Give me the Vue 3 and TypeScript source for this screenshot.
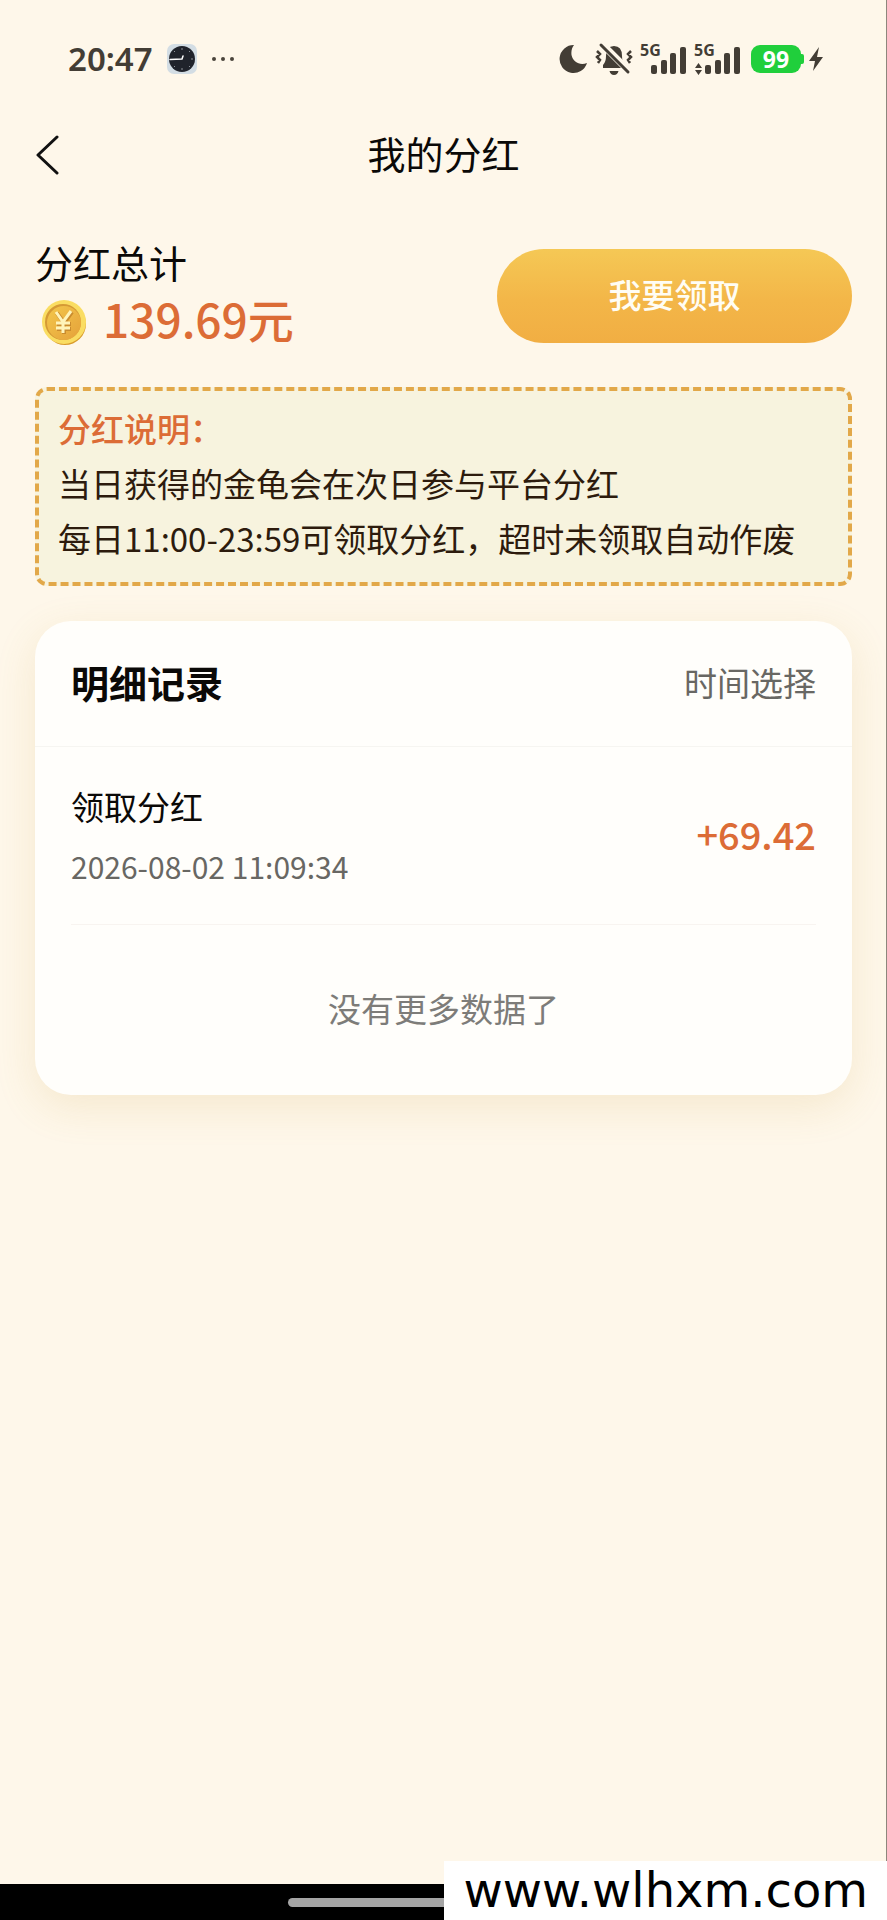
<script setup lang="ts">
interface DividendRecord {
  id: number
  title: string
  time: string
  amount: string
}

const total = '139.69'
const rules: string[] = [
  '当日获得的金龟会在次日参与平台分红',
  '每日11:00-23:59可领取分红，超时未领取自动作废',
]
const records: DividendRecord[] = [
  { id: 1, title: '领取分红', time: '2026-08-02 11:09:34', amount: '+69.42' },
]
</script>

<template>
  <div class="screen">
    <div class="status">
      <div class="status-group">
        <span class="clock-text">20:47</span>
        <svg width="30" height="30" viewBox="0 0 30 30" aria-hidden="true">
          <rect width="30" height="30" rx="7" fill="#d3dde4" />
          <circle cx="15" cy="15" r="13" fill="#20232b" />
          <path d="M15 4v2M15 24v2M26 15h-2M7 7l1 1M23 7l-1 1M7 23l1-1M23 23l-1-1" stroke="#8d9298" stroke-width="1" />
          <path d="M3 15.500L15 15M15 15l1-3" stroke="#fff" stroke-width="1.500" stroke-linecap="round" />
        </svg>
        <svg width="24" height="6" viewBox="0 0 24 6" fill="#4a443b" aria-hidden="true">
          <circle cx="3" cy="3" r="2" /><circle cx="12" cy="3" r="2" /><circle cx="21" cy="3" r="2" />
        </svg>
      </div>
      <div class="status-group status-right">
        <svg width="30" height="32" viewBox="0 0 30 32" fill="#433d35" aria-hidden="true">
          <path d="M15 2A14 14 0 1 0 28 20C21 23 14 19 12.500 12C12 8 13 4.500 15 2Z" />
        </svg>
        <svg width="38" height="34" viewBox="0 0 38 34" fill="#433d35" aria-hidden="true">
          <path d="M8 26V23Q11 20 11 14Q11 4 19 4Q27 4 27 14Q27 20 30 23V26Z" />
          <path d="M14.500 29h9q-1 4-4.500 4t-4.500-4Z" />
          <path d="M6 1L35 30" stroke="#fef7ea" stroke-width="7" />
          <path d="M6 3L33 30" stroke="#433d35" stroke-width="3" stroke-linecap="round" />
          <path d="M2 9l3 3-3 3 3 3-2 3M36 9l-3 3 3 3-3 3 2 3" fill="none" stroke="#433d35" stroke-width="2.500" />
        </svg>
        <svg width="48" height="44" viewBox="0 -5 48 44" fill="#433d35" aria-hidden="true">
          <text x="1" y="14" class="network">5G</text>
          <rect x="12" y="23" width="6" height="9" rx="2" />
          <rect x="22" y="18" width="6" height="14" rx="2" />
          <rect x="31" y="11" width="6" height="21" rx="2" />
          <rect x="41" y="5" width="6" height="27" rx="2" />
        </svg>
        <svg width="48" height="44" viewBox="0 -5 48 44" fill="#433d35" aria-hidden="true">
          <text x="1" y="14" class="network">5G</text>
          <path d="M2 26L5.500 21L9 26ZM2 28L5.500 33L9 28Z" />
          <rect x="12" y="23" width="6" height="9" rx="2" />
          <rect x="22" y="18" width="6" height="14" rx="2" />
          <rect x="31" y="11" width="6" height="21" rx="2" />
          <rect x="41" y="5" width="6" height="27" rx="2" />
        </svg>
        <span class="battery">99</span>
        <svg width="14" height="26" viewBox="0 0 14 26" fill="#433d35" aria-hidden="true">
          <path d="M10 1L0 15H6L4 25L14 11H8Z" />
        </svg>
      </div>
    </div>

    <header class="nav">
      <button type="button" class="back" aria-label="返回">
        <svg width="24" height="42" viewBox="0 0 24 42" fill="none" stroke="#111" stroke-width="3" stroke-linecap="round" stroke-linejoin="round" aria-hidden="true">
          <path d="M22 3L3 21L22 39" />
        </svg>
      </button>
      <h1>我的分红</h1>
    </header>

    <main>
      <section class="summary">
        <div>
          <h2>分红总计</h2>
          <p class="total">
            <svg width="46" height="46" viewBox="0 0 46 46" aria-hidden="true">
              <defs>
                <linearGradient id="coin" x1="0" y1="0" x2="1" y2="1">
                  <stop offset="0" stop-color="#f3c74b" />
                  <stop offset="1" stop-color="#e5a13a" />
                </linearGradient>
              </defs>
              <circle cx="24" cy="24" r="21" fill="#d99b2c" />
              <circle cx="23" cy="22" r="22" fill="#fadd62" />
              <circle cx="22" cy="22" r="18" fill="#d59a35" />
              <circle cx="23" cy="23" r="17" fill="url(#coin)" />
              <path d="M16 13L23 23L31 12M23 23V34M16 24H30M16 29H30" fill="none" stroke="#ca8c2e" stroke-width="4" />
              <path d="M15 12L22 22L30 11M22 22V33M15 23H29M15 28H29" fill="none" stroke="#fff4ba" stroke-width="3" />
            </svg>
            <strong>{{ total }}元</strong>
          </p>
        </div>
        <button type="button" class="claim">我要领取</button>
      </section>

      <section class="notice">
        <h2>分红说明：</h2>
        <p v-for="rule in rules" :key="rule">{{ rule }}</p>
      </section>

      <section class="card">
        <div class="card-head">
          <h2>明细记录</h2>
          <button type="button">时间选择</button>
        </div>
        <ul>
          <li v-for="record in records" :key="record.id">
            <div>
              <h3>{{ record.title }}</h3>
              <time>{{ record.time }}</time>
            </div>
            <strong>{{ record.amount }}</strong>
          </li>
        </ul>
        <p class="end">没有更多数据了</p>
      </section>
    </main>

    <footer class="gesture">
      <div class="pill"></div>
    </footer>
    <div class="site">www.wlhxm.com</div>
  </div>
</template>

<style>
body {
  margin: 0;
}
</style>

<style scoped>
.screen {
  position: relative;
  box-sizing: border-box;
  min-height: 100vh;
  display: flex;
  flex-direction: column;
  background: #fef7ea;
  color: #0b0907;
  font-family: "Noto Sans CJK SC", "Noto Sans", sans-serif;
}
.screen::after {
  content: "";
  position: absolute;
  top: 0;
  right: 0;
  bottom: 36px;
  width: 1px;
  background: #8d877c;
}
h1, h2, h3, p, ul {
  margin: 0;
  padding: 0;
  font-weight: 400;
}
button {
  padding: 0;
  border: 0;
  background: none;
  font: inherit;
  cursor: pointer;
}
svg {
  display: block;
  flex: none;
}
.status {
  display: flex;
  justify-content: space-between;
  align-items: center;
  height: 118px;
  padding: 0 64px 0 68px;
}
.status-group {
  display: flex;
  align-items: center;
  gap: 14px;
}
.status-right {
  gap: 6px;
}
.clock-text {
  font: 600 33px/40px "Noto Sans", sans-serif;
  color: #433d35;
}
.network {
  font: 700 16px "Noto Sans", sans-serif;
}
.battery {
  position: relative;
  width: 50px;
  margin: 0 2px 0 4px;
  border-radius: 9px;
  background: #20cf3c;
  color: #fff;
  font: 700 23px/28px "Noto Sans", sans-serif;
  text-align: center;
}
.battery::after {
  content: "";
  position: absolute;
  top: 9px;
  right: -3px;
  width: 5px;
  height: 10px;
  border-radius: 2px;
  background: #20cf3c;
}
.nav {
  display: grid;
  grid-template-columns: 60px 1fr 60px;
  align-items: center;
  height: 74px;
  padding: 0 35px;
}
.nav h1 {
  padding-bottom: 4px;
  font-size: 38px;
  line-height: 56px;
  text-align: center;
}
main {
  flex: 1;
  padding: 42px 35px 0;
}
.summary {
  display: flex;
  justify-content: space-between;
  align-items: flex-start;
}
.summary h2 {
  font-size: 38px;
  line-height: 56px;
}
.total {
  display: flex;
  align-items: flex-end;
  gap: 16px;
  padding-left: 6px;
  color: #dc6c36;
}
.total strong {
  font-size: 46px;
  line-height: 56px;
  font-weight: 500;
}
.claim {
  width: 355px;
  height: 94px;
  margin-top: 15px;
  padding-bottom: 4px;
  border-radius: 47px;
  background: linear-gradient(#f5c855, #f3b648 55%, #f1ae43);
  color: #fffdf4;
  font-size: 33px;
  font-weight: 500;
}
.notice {
  margin-top: 41px;
  padding: 10px 19px 16px;
  border: 4px dashed #e2a849;
  border-radius: 12px;
  background: #f7f3de;
  color: #2d1b0d;
  font-size: 33px;
  line-height: 55px;
}
.notice h2 {
  color: #dc6c36;
  font-size: 33px;
  font-weight: 500;
}
.card {
  margin-top: 35px;
  border-radius: 36px;
  background: #fffefb;
  box-shadow: 0 12px 40px rgba(200, 160, 60, 0.16);
}
.card-head {
  display: flex;
  justify-content: space-between;
  align-items: center;
  height: 121px;
  padding: 0 36px 4px;
  border-bottom: 1px solid #f6f5f1;
}
.card-head h2 {
  font-size: 38px;
  font-weight: 700;
}
.card-head button {
  color: #686763;
  font-size: 33px;
}
ul {
  margin: 0 36px;
  list-style: none;
}
li {
  display: flex;
  justify-content: space-between;
  align-items: center;
  height: 177px;
  border-bottom: 1px solid #f8f4f0;
}
li h3 {
  margin-bottom: 12px;
  font-size: 33px;
  line-height: 48px;
}
li time {
  display: block;
  color: #686763;
  font-size: 30px;
  line-height: 48px;
}
li strong {
  padding-bottom: 4px;
  color: #dc6c36;
  font-size: 38px;
  font-weight: 500;
}
.end {
  padding: 58px 36px 62px;
  color: #7d7c79;
  font-size: 33px;
  line-height: 50px;
  text-align: center;
}
.gesture {
  display: flex;
  justify-content: center;
  align-items: center;
  height: 36px;
  background: #000;
}
.pill {
  width: 35%;
  height: 9px;
  border-radius: 5px;
  background: #a5a5a5;
}
.site {
  position: absolute;
  right: 0;
  bottom: 0;
  z-index: 1;
  padding: 0 19px;
  background: #fff;
  color: #000;
  font: 48px/59px "DejaVu Sans", sans-serif;
}
</style>
